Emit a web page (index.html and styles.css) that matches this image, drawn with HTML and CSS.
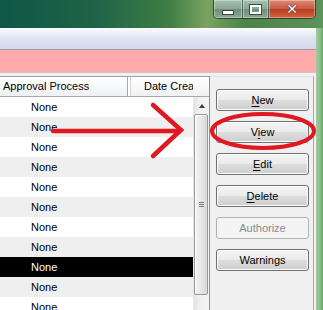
FILE: index.html
```html
<!DOCTYPE html>
<html lang="en">
<head>
    <meta charset="UTF-8">
    <title>Approval list</title>
    <link rel="stylesheet" href="styles.css">
</head>
<body>
    <div class="screen">
        <div class="titlebar">
            <div class="caption-btns">
                <div class="cap cap-min"><span class="min-bar"></span></div>
                <div class="cap cap-max"><span class="max-box"></span></div>
                <div class="cap cap-close"><span class="close-x">&#x2715;</span></div>
            </div>
        </div>

        <div class="frame">
            <div class="dialog">
                <div class="toolstrip"></div>
                <div class="alert"></div>
                <div class="content">
                    <div class="grid">
                        <div class="grid-head">
                            <div class="col-head col-approval">Approval Process</div>
                            <div class="col-head col-date">Date Created</div>
                            <div class="col-head col-fill"></div>
                        </div>
                        <div class="grid-body">
                            <div class="rows">
                                <div class="row">None</div>
                                <div class="row alt">None</div>
                                <div class="row">None</div>
                                <div class="row alt">None</div>
                                <div class="row">None</div>
                                <div class="row alt">None</div>
                                <div class="row">None</div>
                                <div class="row alt">None</div>
                                <div class="row selected">None</div>
                                <div class="row alt">None</div>
                                <div class="row">None</div>
                            </div>
                            <div class="vscroll">
                                <div class="scroll-up"><span class="arrow-up"></span></div>
                                <div class="thumb"><span class="grip"></span></div>
                            </div>
                        </div>
                    </div>

                    <div class="actions">
                        <button class="btn"><u>N</u>ew</button>
                        <button class="btn">V<u>i</u>ew</button>
                        <button class="btn"><u>E</u>dit</button>
                        <button class="btn"><u>D</u>elete</button>
                        <button class="btn" disabled>Authorize</button>
                        <button class="btn">Warnings</button>
                    </div>
                </div>
            </div>
            <div class="frame-right"></div>
        </div>

        <!-- red marks drawn over the screenshot -->
        <svg class="marks" width="323" height="310" viewBox="0 0 323 310">
            <path d="M53 131 L179 131" />
            <path d="M153 105 L181 130 L153 156" />
            <ellipse cx="263" cy="131" rx="51" ry="17" />
        </svg>
    </div>
</body>
</html>
```

FILE: styles.css
```css
body {
    margin: 0;
    font-family: "Liberation Sans", Arial, sans-serif;
    font-size: 11px;
    color: #000;
}
.screen {
    position: relative;
    width: 323px;
    height: 310px;
    overflow: hidden;
    background: linear-gradient(90deg, #0f5746 0%, #1f6448 30%, #3f7d43 52%, #79a262 64%, #4a8448 76%, #5c935a 100%);
}

/* window caption */
.titlebar {
    height: 28px;
    display: flex;
    justify-content: flex-end;
    padding-right: 7px;
}
.caption-btns {
    display: flex;
    height: 19px;
    border: 1px solid rgba(20, 40, 30, 0.7);
    border-top: none;
    border-radius: 0 0 5px 5px;
    overflow: hidden;
    box-sizing: border-box;
}
.cap {
    display: flex;
    align-items: center;
    justify-content: center;
    box-sizing: border-box;
    border-right: 1px solid rgba(20, 40, 30, 0.5);
    box-shadow: inset 0 0 0 1px rgba(255, 255, 255, 0.35);
}
.cap-min, .cap-max {
    background: linear-gradient(#a9bfae, #8aa593 50%, #6f8f7b 51%, #8ba892);
}
.cap-min { width: 29px; }
.cap-max { width: 26px; }
.cap-close {
    width: 46px;
    border-right: none;
    background: linear-gradient(#dd8a78, #c8573f 50%, #b83b22 51%, #d4623c);
}
.min-bar {
    width: 10px;
    height: 3px;
    margin-top: 6px;
    background: #fff;
    border: 1px solid #3a4a40;
}
.max-box {
    width: 7px;
    height: 5px;
    border: 2px solid #fff;
    outline: 1px solid #3a4a40;
    margin-top: 1px;
}
.close-x {
    color: #fff;
    font-family: "DejaVu Sans", sans-serif;
    font-weight: bold;
    font-size: 14px;
    line-height: 14px;
    text-shadow: 0 0 1px #3a2a20, 0 0 1px #3a2a20;
}

/* dialog */
.frame {
    display: flex;
    height: 282px;
}
.dialog {
    width: 316px;
    background: #f0f0f0;
    border-top: 1px solid #fff;
    box-sizing: border-box;
}
.frame-right {
    width: 7px;
    background: linear-gradient(90deg, #a6c9a4, #86bf86 60%, #6aa56a);
}
.toolstrip {
    height: 20px;
    background: linear-gradient(#f8f9fc, #dde2f2 50%, #d2d8ee);
    border-bottom: 1px solid #9c9c9c;
}
.alert {
    height: 22px;
    background: #ffabab;
    border-bottom: 1px solid #c8c8c8;
}
.content {
    display: flex;
    padding-top: 3px;
}

/* list grid */
.grid {
    width: 210px;
    border-top: 1px solid #a0a0a0;
    border-right: 1px solid #8e8e8e;
    box-sizing: border-box;
    background: #fff;
}
.grid-head {
    display: flex;
    height: 19px;
    border-bottom: 1px solid #a8a8a8;
    background: linear-gradient(#ffffff, #f7f8f9 50%, #eef0f3);
}
.col-head {
    line-height: 18px;
    white-space: nowrap;
    overflow: hidden;
    box-sizing: border-box;
}
.col-approval {
    width: 131px;
    padding-left: 3px;
    border-right: 1px solid #d5d5d5;
    box-shadow: inset -2px 0 0 #fff, inset -3px 0 0 #a8a8a8;
}
.col-date {
    width: 62px;
    padding-left: 13px;
}
.col-fill {
    flex: 1;
}
.grid-body {
    display: flex;
}
.rows {
    width: 193px;
}
.row {
    height: 20px;
    line-height: 20px;
    padding-left: 31px;
    background: #fff;
}
.row.alt {
    background: #efefef;
}
.row.selected {
    background: #000;
    color: #fff;
}
.vscroll {
    width: 16px;
    background: linear-gradient(90deg, #e3e3e3, #f1f1f1 40%, #f4f4f4);
    border-left: 1px solid #e8e8e8;
    box-sizing: border-box;
}
.scroll-up {
    height: 17px;
    display: flex;
    justify-content: center;
    align-items: center;
}
.arrow-up {
    width: 0;
    height: 0;
    border-left: 3px solid transparent;
    border-right: 3px solid transparent;
    border-bottom: 4px solid #3c3c3c;
    margin-top: 1px;
}
.thumb {
    height: 179px;
    margin: 0 1px 0 0;
    border: 1px solid #989898;
    border-radius: 2px;
    background: linear-gradient(90deg, #f4f4f4, #e8e8e8 50%, #d8d8d8);
    box-shadow: inset 1px 1px 0 #fff;
    display: flex;
    justify-content: center;
    align-items: center;
}
.grip {
    width: 5px;
    height: 5px;
    background: repeating-linear-gradient(#7a7a7a 0 1px, transparent 1px 2px);
}

/* buttons panel */
.actions {
    width: 104px;
    height: 240px;
    padding: 12px 0 0 6px;
    border-top: 1px solid #e0e0e0;
    border-right: 1px solid #a8a8a8;
    box-sizing: border-box;
    display: flex;
    flex-direction: column;
    gap: 10px;
}
.btn {
    width: 93px;
    height: 22px;
    padding: 0;
    font-family: "Liberation Sans", Arial, sans-serif;
    font-size: 11px;
    color: #000;
    border: 1px solid #707070;
    border-radius: 3px;
    background: linear-gradient(#f2f2f2, #ebebeb 50%, #dddddd 51%, #cfcfcf);
    box-shadow: inset 0 0 0 1px #fcfcfc;
}
.btn u {
    text-decoration-thickness: 1px;
    text-underline-offset: 2px;
}
.btn:disabled {
    color: #8a8a8a;
    border-color: #adb2b5;
    background: #f4f4f4;
    box-shadow: none;
}

/* annotation overlay */
.marks {
    position: absolute;
    left: 0;
    top: 0;
    pointer-events: none;
}
.marks path, .marks ellipse {
    fill: none;
    stroke: #e01820;
    stroke-width: 4.5;
    stroke-linecap: round;
    stroke-linejoin: miter;
}
.marks ellipse {
    stroke-width: 4;
}
```
